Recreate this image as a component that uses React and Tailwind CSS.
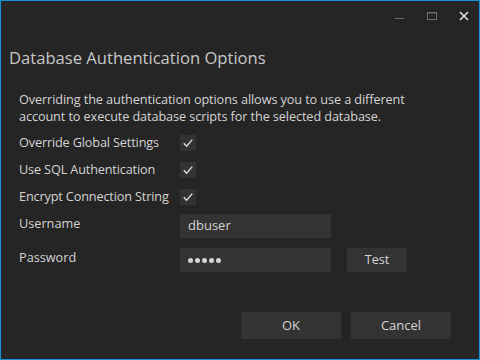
import React from "react";

const rows = ["Override Global Settings", "Use SQL Authentication", "Encrypt Connection String"];

function Check() {
  return (
    <div className="w-4 h-4 bg-[#333333] flex items-center justify-center">
      <svg width="12" height="12" viewBox="0 0 12 12" fill="none">
        <path d="M1.8 6.3 L4.6 9.2 L10.3 2.6" stroke="#dcdcdc" strokeWidth="1.4" />
      </svg>
    </div>
  );
}

export default function App() {
  return (
    <div
      className="w-[480px] h-[360px] bg-[#252525] border border-[#1c8fdc] flex flex-col text-[#d4d4d4] overflow-hidden"
      style={{ fontFamily: '"Open Sans", "Noto Sans", sans-serif' }}
    >
      <div className="h-[29px] flex items-center justify-end pr-[9px] gap-[20px]">
        <svg width="12" height="12" viewBox="0 0 12 12">
          <rect x="1" y="8" width="9" height="1" fill="#6a6a6a" />
        </svg>
        <svg width="12" height="12" viewBox="0 0 12 12" fill="none">
          <rect x="1.5" y="2.5" width="9" height="7" stroke="#6a6a6a" />
          <rect x="1" y="2" width="10" height="1.5" fill="#6a6a6a" />
        </svg>
        <svg width="12" height="12" viewBox="0 0 12 12" fill="none">
          <path d="M2 2 L10 10 M10 2 L2 10" stroke="#e0e0e0" strokeWidth="1.6" />
        </svg>
      </div>
      <div className="pl-[8px] pt-[16px] text-[16.6px] leading-[24px] text-[#c8c8c8]">
        Database Authentication Options
      </div>
      <div className="pl-[18px] pt-[21px] text-[12.7px] leading-[17px] tracking-[-0.1px]">
        <p>Overriding the authentication options allows you to use a different</p>
        <p>account to execute database scripts for the selected database.</p>
      </div>
      <div className="pl-[18px] pt-[4px] flex flex-col">
        {rows.map((r) => (
          <div key={r} className="h-[27px] flex items-center">
            <span className="w-[161px] text-[12.7px] tracking-[-0.15px]">{r}</span>
            <Check />
          </div>
        ))}
        <div className="h-[34px] flex items-center -mt-[1px]">
          <span className="w-[161px] text-[12.7px] -mt-[4px]">Username</span>
          <div className="w-[151px] h-[24px] bg-[#333333] flex items-center pl-[8px] text-[13px]">dbuser</div>
        </div>
        <div className="h-[34px] flex items-center">
          <span className="w-[161px] text-[12.7px] -mt-[4px]">Password</span>
          <div className="w-[151px] h-[24px] bg-[#333333] flex items-center pl-[8px] gap-[2px]">
            {[0, 1, 2, 3, 4].map((i) => (
              <span key={i} className="w-[5px] h-[5px] rounded-full bg-[#d4d4d4]" />
            ))}
          </div>
          <div className="ml-[16px] w-[60px] h-[24px] bg-[#333333] flex items-center justify-center text-[12.7px]">Test</div>
        </div>
      </div>
      <div className="flex-1" />
      <div className="flex justify-end gap-[10px] pr-[28px] pb-[20px]">
        <div className="w-[100px] h-[27px] bg-[#333333] flex items-center justify-center text-[13px]">OK</div>
        <div className="w-[100px] h-[27px] bg-[#333333] flex items-center justify-center text-[13px]">Cancel</div>
      </div>
    </div>
  );
}
